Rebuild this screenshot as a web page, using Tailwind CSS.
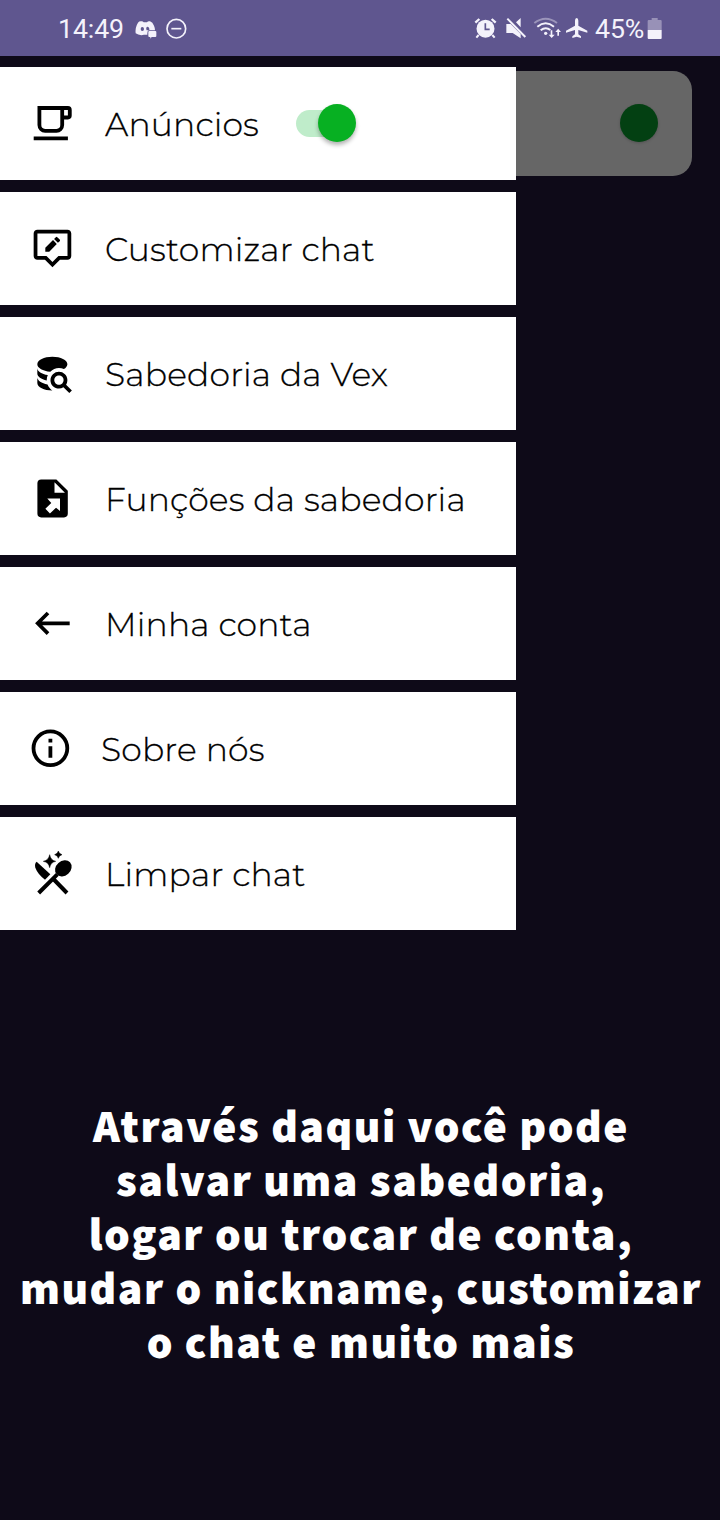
<!DOCTYPE html>
<html lang="pt-BR">
<head>
<meta charset="utf-8">
<title>Menu</title>
<script src="https://cdn.jsdelivr.net/npm/@tailwindcss/browser@4"></script>
</head>
<body class="bg-[#0e0a18]">
<div class="w-[720px] h-[1520px] overflow-hidden bg-[#0e0a18] flex flex-col">
  <header class="h-14 shrink-0 bg-[#5f568f] text-[#f4f2fb] flex items-center font-['Roboto',sans-serif] text-[26.700px] tracking-[-0.1px] pl-[58px] pr-[57px]">
    <span class="w-[75px] whitespace-nowrap pt-[3px]">14:49</span>
    <svg class="w-[60px] h-14" viewBox="279 0 180 168" fill="currentColor">
      <path d="M302 64Q308 62 311 67H321Q324 62 330 64Q338 66 342 77Q345 84 345 91H326Q322 93 322 100V104H312L304 106Q294 105 287 100Q285 82 294 68Q297 64 302 64Z"/>
      <ellipse cx="307" cy="87" rx="5" ry="6" fill="#5f568f"/><path d="M320 81Q326 79 328 86V91H320Q317 86 320 81Z" fill="#5f568f"/>
      <path d="M328 93H346Q349 93 349 96V108Q349 111 346 111H335L331 116V111H328Q325 111 325 108V96Q325 93 328 93Z"/>
      <circle cx="409" cy="86" r="28" fill="none" stroke="currentColor" stroke-width="5"/><path d="M394 83.500H424V88.500H394Z"/>
    </svg>
    <svg class="w-[122px] h-14 ml-auto" viewBox="30 0 366 168" fill="currentColor">
      <circle cx="76.500" cy="86" r="27"/><path d="M46 68L58 57M107 68L95 57" stroke="currentColor" stroke-width="7"/><path d="M56 105L49 113M97 105L104 113" stroke="currentColor" stroke-width="6"/><path d="M76 70V88H89" fill="none" stroke="#5f568f" stroke-width="5"/>
      <path d="M139 72H152L182 102V115L158 99H139ZM168 67L182 54V82Z"/><path d="M142 56L196 111" stroke="currentColor" stroke-width="6"/>
      <g fill="none" stroke="currentColor" stroke-width="6"><path d="M223 69Q257 43 291 69" opacity=".4"/><path d="M232 80Q257 60 282 80"/><path d="M242 91Q257 79 271 90"/></g><circle cx="257" cy="100" r="5"/>
      <path d="M272 91H277V104H284L275 114L266 104H272ZM292 107H297V96H303L294.500 86L286 96H292Z"/>
      <path d="M350 54Q355 54 355 62V77L382 92V98L355 90V103L363 109V114L350 110L337 114V109L345 103V90L318 98V92L345 77V62Q345 54 350 54Z"/>
    </svg>
    <span class="w-[52px] pl-[3px] whitespace-nowrap pt-[3px]">45%</span>
    <svg class="w-4 h-14 ml-[3px]" viewBox="562 0 48 168" fill="currentColor"><path d="M576 54H594V60H603Q606 60 606 63V90H564V63Q564 60 567 60H576Z" opacity=".38"/><path d="M564 90H606V114Q606 117 603 117H567Q564 117 564 114Z"/></svg>
  </header>

  <div class="flex items-start pt-[11px]">
    <nav class="w-[516px] flex flex-col gap-3 font-['Montserrat','Inter',sans-serif] font-light text-[33px] tracking-[0.18px] text-black [-webkit-text-stroke:0.3px_black] [&>div]:h-[113px] [&>div]:bg-white [&>div]:flex [&>div]:items-center [&_svg]:w-[105px] [&_svg]:h-[113px] [&_svg]:shrink-0 [&_span]:whitespace-nowrap [&_span]:pt-[2px]">
      <div>
        <svg viewBox="0 0 105 113"><path transform="translate(29.9 33.400) scale(1.9)" d="M2,21V19H20V21H2M20,8V5H18V8H20M20,3A2,2 0 0,1 22,5V8A2,2 0 0,1 20,10H18V13A4,4 0 0,1 14,17H8A4,4 0 0,1 4,13V3H20M16,5H6V13A2,2 0 0,0 8,15H14A2,2 0 0,0 16,13V5Z"/></svg>
        <span>Anúncios</span>
        <i class="relative ml-auto mr-[160px] w-[60px] h-[27px] rounded-full bg-linear-to-r from-[#bfecca] from-75% to-transparent to-75%"><b class="absolute right-0 -top-[6px] size-[38px] rounded-full bg-[#07b022] shadow-[0_3px_4px_rgba(0,0,0,0.3)]"></b></i>
      </div>
      <div>
        <svg viewBox="0 0 105 113"><path transform="translate(29.9 33.900) scale(1.88)" d="M20 2H4C2.89 2 2 2.89 2 4V16C2 17.110 2.900 18 4 18H8L12 22L16 18H20C21.110 18 22 17.110 22 16V4C22 2.890 21.100 2 20 2M4 16V4H20V16H15.170L12 19.170L8.830 16H4M8.200 11.650V13.700H10.300L14.300 9.600L12.300 7.550ZM15.850 8.100L14.900 9L12.850 6.950L13.800 6a.5.5 0 0 1 .75 0l1.300 1.300a.55.55 0 0 1 0 .8Z"/></svg>
        <span>Customizar chat</span>
      </div>
      <div>
        <svg viewBox="0 0 105 113"><path transform="translate(29.8 34) scale(1.88)" d="M18.680,12.320C16.920,10.560 14.070,10.570 12.320,12.330C10.560,14.090 10.560,16.940 12.320,18.690C13.810,20.170 16.110,20.430 17.890,19.320L21,22.390L22.390,21L19.300,17.890C20.430,16.120 20.170,13.800 18.680,12.320M17.270,17.270C16.290,18.250 14.710,18.240 13.730,17.270C12.760,16.290 12.760,14.710 13.740,13.730C14.710,12.760 16.290,12.760 17.270,13.730C18.240,14.710 18.240,16.290 17.270,17.270M10.900,20.100C10.250,19.440 9.740,18.650 9.420,17.780C6.270,17.250 4,15.760 4,14V17C4,19.210 7.580,21 12,21V21C11.600,20.740 11.230,20.440 10.900,20.100M4,9V12C4,13.680 6.070,15.120 9,15.700C9,15.630 9,15.570 9,15.500C9,14.570 9.200,13.650 9.580,12.810C6.340,12.300 4,10.790 4,9M12,3C7.580,3 4,4.790 4,7C4,9 7,10.680 10.850,11H10.900C12.100,9.740 13.760,9 15.500,9C16.410,9 17.310,9.190 18.140,9.560C19.170,9.090 19.870,8.120 20,7C20,4.790 16.420,3 12,3Z"/></svg>
        <span>Sabedoria da Vex</span>
      </div>
      <div>
        <svg viewBox="0 0 105 113"><path fill-rule="evenodd" transform="translate(29.8 33.6) scale(1.9)" d="M6 2H14L20 8V20A2 2 0 0 1 18 22H6A2 2 0 0 1 4 20V4A2 2 0 0 1 6 2ZM13 3.500V9H18.500ZM9.200 12.100H15.900V18.600L13.800 16.900L10.600 20L8.200 17.400L11.300 14.400Z"/></svg>
        <span>Funções da sabedoria</span>
      </div>
      <div>
        <svg viewBox="0 0 105 113" fill="none" stroke="#000" stroke-width="3.700"><path d="M69.700 56.300H38M48 46L37.700 56.300L48 66.600"/></svg>
        <span>Minha conta</span>
      </div>
      <div>
        <svg viewBox="0 0 105 113"><circle cx="50.400" cy="56.300" r="16.900" fill="none" stroke="#000" stroke-width="3.800"/><path d="M48.500 46.700H52.300V50.400H48.500ZM48.500 54.200H52.300V65.700H48.500Z"/></svg>
        <span class="-ml-1">Sobre nós</span>
      </div>
      <div>
        <svg viewBox="0 0 105 113"><g transform="translate(20 23) scale(.3333)"><path d="M50 65L91 103L75 119Q53 102 46 83Q43 70 50 65Z"/><path d="M103 120L141 159M56 159L112 103" fill="none" stroke="#000" stroke-width="12"/><ellipse cx="130" cy="85" rx="27" ry="22" transform="rotate(-42 130 85)"/><path d="M89 44Q92 61 107 64Q92 67 89 83Q86 67 70 64Q86 61 89 44ZM115 33Q117 42 126 44Q117 46 115 55Q113 46 104 44Q113 42 115 33Z" stroke="#000" stroke-width="1.500"/></g></svg>
        <span>Limpar chat</span>
      </div>
    </nav>
    <div class="mt-1 w-44 h-[105px] rounded-r-[19px] bg-[#666] flex items-center justify-end pr-[34px]">
      <b class="size-[38px] rounded-full bg-[#034012] shadow-[0_1px_3px_rgba(0,0,0,0.2)] -mt-px"></b>
    </div>
  </div>

  <p class="mt-[171px] pl-[2px] text-center text-white font-['Source_Sans_Pro','Source_Sans_3','Noto_Sans_CJK_JP',sans-serif] font-black text-[46px] leading-[54px] tracking-[1.56px] whitespace-nowrap">Através daqui você pode<br>salvar uma sabedoria,<br>logar ou trocar de conta,<br>mudar o nickname, customizar<br>o chat e muito mais</p>
</div>
</body>
</html>
